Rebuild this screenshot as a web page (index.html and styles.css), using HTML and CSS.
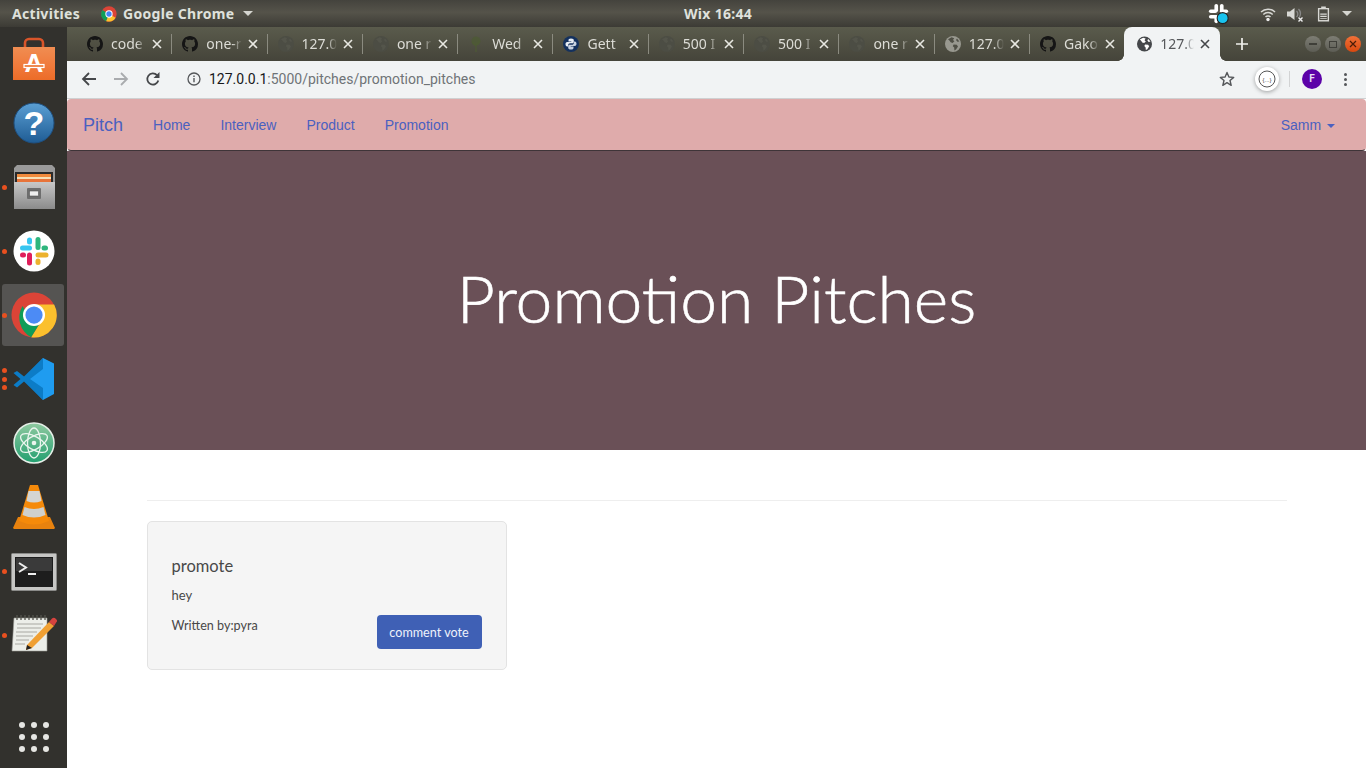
FILE: index.html
```html
<!DOCTYPE html>
<html lang="en">
<head>
<meta charset="utf-8">
<title>Pitch</title>
<link rel="stylesheet" href="styles.css">
</head>
<body>
<svg class="defs" width="0" height="0" aria-hidden="true">
  <symbol id="gh" viewBox="0 0 16 16"><path d="M8 0C3.58 0 0 3.58 0 8c0 3.54 2.29 6.53 5.47 7.59.4.07.55-.17.55-.38 0-.19-.01-.82-.01-1.49-2.01.37-2.53-.49-2.69-.94-.09-.23-.48-.94-.82-1.13-.28-.15-.68-.52-.01-.53.63-.01 1.08.58 1.23.82.72 1.21 1.87.87 2.33.66.07-.52.28-.87.51-1.07-1.78-.2-3.64-.89-3.64-3.95 0-.87.31-1.59.82-2.15-.08-.2-.36-1.02.08-2.12 0 0 .67-.21 2.2.82.64-.18 1.32-.27 2-.27.68 0 1.36.09 2 .27 1.53-1.04 2.2-.82 2.2-.82.44 1.1.16 1.92.08 2.12.51.56.82 1.27.82 2.15 0 3.07-1.87 3.75-3.65 3.95.29.25.54.73.54 1.48 0 1.07-.01 1.93-.01 2.2 0 .21.15.46.55.38A8.013 8.013 0 0016 8c0-4.42-3.58-8-8-8z" fill="currentColor"/></symbol>
  <symbol id="globe" viewBox="0 0 16 16"><circle cx="8" cy="8" r="8" fill="currentColor"/><path class="land" d="M3 3.2 6.6 1.3 9.2 2.2 8 4 9.4 5.2 7.6 7 5.6 6.3 4.6 4.8ZM8.6 8.4 11.8 8.8 13 10.4 11 13.6 9.4 14.4 9.2 11.6 7.8 10.2ZM12 2.6 14.4 5.4 12.4 5.8 11 4Z"/></symbol>
  <symbol id="cross" viewBox="0 0 10 10"><path d="M1 1 9 9M9 1 1 9" stroke="currentColor" stroke-width="1.6" fill="none"/></symbol>
</svg>

<div class="desktop">
  <header class="topbar">
    <div class="top-left">
      <span class="top-item">Activities</span>
      <span class="top-app">
        <svg class="chrome-mini" viewBox="0 0 48 48"><circle cx="24" cy="24" r="23" fill="#db4437"/><path d="M24 24 44 35A23 23 0 0 1 15 45Z" fill="#fbc02d"/><path d="M24 24 15 46A23 23 0 0 1 4 12Z" fill="#0f9d58"/><circle cx="24" cy="24" r="11" fill="#fff"/><circle cx="24" cy="24" r="8" fill="#4285f4"/></svg>
        <span class="top-item">Google Chrome</span>
        <span class="caret-top"></span>
      </span>
    </div>
    <span class="top-item clock">Wix 16:44</span>
    <div class="top-right">
      <span class="slack-tray">
        <svg viewBox="0 0 24 24" width="22" height="22"><g fill="#fff"><rect x="7" y="1" width="4" height="9" rx="2"/><rect x="1" y="7" width="9" height="4" rx="2"/><rect x="13" y="1" width="4" height="9" rx="2"/><rect x="1" y="13" width="9" height="4" rx="2"/><rect x="7" y="13" width="4" height="9" rx="2"/><rect x="13" y="7" width="9" height="4" rx="2"/></g><circle cx="16" cy="16.500" r="6" fill="#19c3ee" stroke="#222" stroke-width="1.200"/></svg>
      </span>
      <svg class="tray wifi" viewBox="0 0 16 16" width="16" height="16"><path d="M1 6a10 10 0 0 1 14 0M3.300 8.500a6.800 6.800 0 0 1 9.400 0M5.500 11a3.500 3.500 0 0 1 5 0" fill="none" stroke="#d8d8d4" stroke-width="1.500"/><circle cx="8" cy="13.500" r="1.700" fill="#eee"/></svg>
      <svg class="tray vol" viewBox="0 0 18 16" width="18" height="16"><path d="M1 5.500h3L8.500 2v12L4 10.500H1Z" fill="#d8d8d4"/><path d="M10.500 5a4 4 0 0 1 0 6M12.500 3a7 7 0 0 1 1 8" fill="none" stroke="#888" stroke-width="1.300"/><path d="M12.500 11.500l4 4M16.500 11.500l-4 4" stroke="#eee" stroke-width="1.400"/></svg>
      <svg class="tray batt" viewBox="0 0 14 16" width="13" height="16"><path d="M4.500 0h5v1.500H13V16H1V1.500h3.500Z" fill="#d8d8d4"/><path d="M2.500 3h9v11.500h-9Z" fill="#4d4c44"/><path d="M3.500 7.500h7v1.300h-7ZM3.500 10h7v1.300h-7ZM3.500 12.500h7v1h-7Z" fill="#d8d8d4"/></svg>
      <span class="caret-top"></span>
    </div>
  </header>

  <nav class="dock">
    <div class="dock-item">
      <svg viewBox="0 0 44 44" width="44" height="44"><defs><linearGradient id="b" x1="0" y1="0" x2="0" y2="1"><stop offset="0" stop-color="#f08d52"/><stop offset=".6" stop-color="#f0793a"/><stop offset="1" stop-color="#ec6c28"/></linearGradient></defs><path d="M13 11V6a4 4 0 0 1 4-4h10a4 4 0 0 1 4 4v5" fill="none" stroke="#d9552a" stroke-width="2.600"/><rect x="1" y="10" width="42" height="33" fill="url(#b)"/><text x="22" y="35" class="bag-a">A</text><rect x="12" y="27.500" width="20" height="3" fill="#ee7f40" stroke="#fff" stroke-width="1.200"/></svg>
    </div>
    <div class="dock-item">
      <svg viewBox="0 0 42 42" width="42" height="42"><defs><linearGradient id="h" x1="0" y1="0" x2="0" y2="1"><stop offset="0" stop-color="#5b9fd4"/><stop offset="1" stop-color="#1f5c94"/></linearGradient></defs><circle cx="21" cy="21" r="20" fill="url(#h)" stroke="#1e4f7f"/><text x="21" y="33" class="help-q">?</text></svg>
    </div>
    <div class="dock-item has-dot">
      <span class="pip"></span>
      <svg viewBox="0 0 44 46" width="44" height="46"><defs><linearGradient id="f" x1="0" y1="0" x2="0" y2="1"><stop offset="0" stop-color="#c8c8c8"/><stop offset="1" stop-color="#8b8b8b"/></linearGradient></defs><path d="M2 4 5 1h35l3 3v41H2Z" fill="#9a9a9a"/><rect x="3" y="8" width="38" height="12" fill="#2a2a2a"/><rect x="5" y="10" width="34" height="3" fill="#f08a3c"/><rect x="5" y="13" width="34" height="2" fill="#f7e0b6"/><rect x="5" y="15" width="34" height="3" fill="#e8743a"/><rect x="2" y="18" width="41" height="27" fill="url(#f)"/><rect x="15" y="24" width="14" height="11" rx="1" fill="#6d6d6d"/><rect x="17.500" y="27" width="9" height="5" fill="#eee" stroke="#555" stroke-width=".6"/></svg>
    </div>
    <div class="dock-item has-dot">
      <span class="pip"></span>
      <svg viewBox="0 0 42 42" width="42" height="42"><circle cx="21" cy="21" r="20.500" fill="#fff"/><g><rect x="7" y="15.500" width="12" height="5" rx="2.500" fill="#36c5f0"/><rect x="14" y="7.500" width="5" height="7" rx="2.500" fill="#36c5f0"/><rect x="22.500" y="7" width="5" height="13" rx="2.500" fill="#2eb67d"/><rect x="28.500" y="15.500" width="6.500" height="5" rx="2.500" fill="#2eb67d"/><rect x="14" y="22.500" width="5" height="13" rx="2.500" fill="#e01e5a"/><rect x="7" y="22.500" width="6" height="5" rx="2.500" fill="#e01e5a"/><rect x="22.500" y="22.500" width="13" height="5" rx="2.500" fill="#ecb22e"/><rect x="22.500" y="28.500" width="5" height="6.500" rx="2.500" fill="#ecb22e"/></g></svg>
    </div>
    <div class="dock-item has-dot active">
      <span class="pip"></span>
      <svg viewBox="0 0 48 48" width="46" height="46"><circle cx="24" cy="24" r="23.500" fill="#db4437"/><path d="M24 13H45A23.500 23.500 0 0 1 21 47.300L33 28Z" fill="#fbc02d"/><path d="M24 35 12 14.500 A23.500 23.500 0 0 0 21 47.300L33 28Z" fill="#0f9d58"/><circle cx="24" cy="24" r="11.500" fill="#fff"/><circle cx="24" cy="24" r="9" fill="#4c8bf5"/></svg>
    </div>
    <div class="dock-item has-dot">
      <span class="pip pip-1"></span><span class="pip"></span><span class="pip pip-3"></span>
      <svg viewBox="0 0 42 44" width="42" height="44"><path d="M30 1 41 6.500V37L30 43 10 22Z" fill="#1f9cf0"/><path d="M30 1 11 19.500 4 14 .5 16 7.500 22 .5 28 4 30.500 11 24.500 30 43 30 31 17 22 30 12Z" fill="#0c7cc7"/></svg>
    </div>
    <div class="dock-item">
      <svg viewBox="0 0 42 42" width="42" height="42"><defs><linearGradient id="a" x1="0" y1="0" x2="0" y2="1"><stop offset="0" stop-color="#8fc9a0"/><stop offset="1" stop-color="#23a070"/></linearGradient></defs><circle cx="21" cy="21" r="20" fill="url(#a)" stroke="#e6efe8" stroke-width="1.500"/><g fill="none" stroke="#eaf5ee" stroke-width="1.300"><ellipse cx="21" cy="21" rx="15" ry="6.500" transform="rotate(30 21 21)"/><ellipse cx="21" cy="21" rx="15" ry="6.500" transform="rotate(-30 21 21)"/><ellipse cx="21" cy="21" rx="15" ry="6.500" transform="rotate(90 21 21)"/></g><circle cx="21" cy="21" r="2.300" fill="#eaf5ee"/></svg>
    </div>
    <div class="dock-item">
      <svg viewBox="0 0 42 46" width="42" height="46"><path d="M0 44 5 33H37L42 44 41 45H1Z" fill="#e8820e"/><path d="M17 1H25L36 37Q21 44 6 37Z" fill="#f58a0a"/><path d="M15.500 7H26.500L28.500 17Q21 20 13.500 17Z" fill="#d4d5d2"/><path d="M11.500 23Q21 27 30.500 23L32.500 31Q21 36 9.500 31Z" fill="#cfd0cd"/></svg>
    </div>
    <div class="dock-item has-dot">
      <span class="pip"></span>
      <svg class="term" viewBox="0 0 46 38" width="46" height="38"><rect x=".5" y=".5" width="45" height="37" rx="1" fill="#c6c6c4" stroke="#8a8a88"/><rect x="4" y="4" width="38" height="30" fill="#1d1d1d"/><rect x="5" y="5" width="36" height="13" fill="#3a3a3a"/><path d="M8 10 15 14.500 8 19" fill="none" stroke="#eee" stroke-width="2"/><rect x="17" y="20" width="8" height="2" fill="#eee"/></svg>
    </div>
    <div class="dock-item has-dot">
      <span class="pip"></span>
      <svg class="notes" viewBox="0 0 46 38" width="46" height="38"><path d="M3 4H36V37H1Z" fill="#eceee9" stroke="#9a9a95" stroke-width=".6"/><g stroke="#55554f" stroke-width="1.300"><path d="M6 1V6M10 1V6M14 1V6M18 1V6M22 1V6M26 1V6M30 1V6M34 1V6"/></g><g stroke="#a8a8a2" stroke-width="1"><path d="M6 10H32M6 14H30M5 18H26M5 22H22M5 26H18M4 30H14"/></g><path d="M16 31 38 8 43 12 21 34 15 36Z" fill="#f0a033"/><path d="M38 8 41 4.500Q43 3 45 5T45.500 8L43 12Z" fill="#d5433f"/><path d="M16 31 21 34 15 36Z" fill="#222"/></svg>
    </div>
    <div class="dock-grid">
      <span></span><span></span><span></span><span></span><span></span><span></span><span></span><span></span><span></span>
    </div>
  </nav>

  <div class="browser">
    <div class="tabstrip">
      <div class="tab"><svg class="fav fav-gh"><use href="#gh"/></svg><span class="tab-title">code</span><svg class="close"><use href="#cross"/></svg></div>
      <div class="tab"><svg class="fav fav-gh"><use href="#gh"/></svg><span class="tab-title">one-r</span><svg class="close"><use href="#cross"/></svg></div>
      <div class="tab"><svg class="fav fav-dim"><use href="#globe"/></svg><span class="tab-title">127.0</span><svg class="close"><use href="#cross"/></svg></div>
      <div class="tab"><svg class="fav fav-dim"><use href="#globe"/></svg><span class="tab-title">one r</span><svg class="close"><use href="#cross"/></svg></div>
      <div class="tab"><svg class="fav" viewBox="0 0 16 16"><path d="M8 16V8M8 10 4 6M8 9l4-4" stroke="#4e5a34" stroke-width="1.200" fill="none"/><circle cx="8" cy="5" r="4.500" fill="#4e5a34" opacity=".8"/></svg><span class="tab-title">Wed</span><svg class="close"><use href="#cross"/></svg></div>
      <div class="tab"><svg class="fav" viewBox="0 0 16 16"><circle cx="8" cy="8" r="8" fill="#14315e"/><path d="M8 2.500c-2 0-2.500.8-2.500 1.800V5.500H8.300V6H4.200C3 6 2.500 7 2.500 8.200S3 10.500 4.200 10.500h1V9c0-1 .8-1.800 1.800-1.800h2.300c.9 0 1.500-.6 1.500-1.500V4.300C10.800 3.200 10 2.500 8 2.500Z" fill="#e8edf4"/><path d="M8 13.500c2 0 2.500-.8 2.500-1.800V10.500H7.700V10h4.100c1.200 0 1.700-1 1.700-2.200s-.5-2.300-1.700-2.300h-1V7c0 1-.8 1.800-1.800 1.800H6.700c-.9 0-1.500.6-1.500 1.500v1.400c0 1.100.8 1.800 2.800 1.800Z" fill="#c9d3e1"/></svg><span class="tab-title">Gett</span><svg class="close"><use href="#cross"/></svg></div>
      <div class="tab"><svg class="fav fav-dim"><use href="#globe"/></svg><span class="tab-title">500 I</span><svg class="close"><use href="#cross"/></svg></div>
      <div class="tab"><svg class="fav fav-dim"><use href="#globe"/></svg><span class="tab-title">500 I</span><svg class="close"><use href="#cross"/></svg></div>
      <div class="tab"><svg class="fav fav-dim"><use href="#globe"/></svg><span class="tab-title">one r</span><svg class="close"><use href="#cross"/></svg></div>
      <div class="tab"><svg class="fav fav-grey"><use href="#globe"/></svg><span class="tab-title">127.0</span><svg class="close"><use href="#cross"/></svg></div>
      <div class="tab"><svg class="fav fav-gh"><use href="#gh"/></svg><span class="tab-title">Gako</span><svg class="close"><use href="#cross"/></svg></div>
      <div class="tab tab-active"><svg class="fav fav-active"><use href="#globe"/></svg><span class="tab-title">127.0</span><svg class="close"><use href="#cross"/></svg></div>
      <svg class="newtab" viewBox="0 0 12 12" width="12" height="12"><path d="M6 0V12M0 6H12" stroke="#f0f0ec" stroke-width="1.700"/></svg>
      <div class="winctl">
        <span class="wbtn"><i class="w-min"></i></span>
        <span class="wbtn"><i class="w-max"></i></span>
        <span class="wbtn wclose"><svg viewBox="0 0 8 8" width="8" height="8"><path d="M1 1 7 7M7 1 1 7" stroke="#4a1c08" stroke-width="1.200"/></svg></span>
      </div>
    </div>

    <div class="toolbar">
      <svg class="tool" viewBox="0 0 16 16" width="16" height="16"><path d="M15 8H2M8 2 2 8l6 6" fill="none" stroke="#45474a" stroke-width="1.800"/></svg>
      <svg class="tool fwd" viewBox="0 0 16 16" width="16" height="16"><path d="M1 8H14M8 2l6 6-6 6" fill="none" stroke="#a9abae" stroke-width="1.800"/></svg>
      <svg class="tool reload" viewBox="0 0 16 16" width="16" height="16"><path d="M13.300 9.500A5.600 5.600 0 1 1 12 4.200" fill="none" stroke="#45474a" stroke-width="1.800"/><path d="M14.500 1v6h-6Z" fill="#45474a"/></svg>
      <div class="omnibox">
        <svg class="info" viewBox="0 0 14 14" width="14" height="14"><circle cx="7" cy="7" r="6" fill="none" stroke="#55575a" stroke-width="1.300"/><path d="M7 6v4.200M7 3.500v1.400" stroke="#55575a" stroke-width="1.400"/></svg>
        <span class="url"><b>127.0.0.1</b>:5000/pitches/promotion_pitches</span>
        <svg class="star" viewBox="0 0 16 16" width="16" height="16"><path d="M8 1.500 9.900 6l4.800.4-3.700 3.100 1.200 4.800L8 11.700l-4.200 2.600L5 9.500 1.300 6.400 6.100 6Z" fill="none" stroke="#55575a" stroke-width="1.400" stroke-linejoin="round"/></svg>
      </div>
      <span class="ext"><svg viewBox="0 0 18 18" width="18" height="18"><circle cx="9" cy="9" r="8" fill="none" stroke="#555" stroke-width="1"/><text x="9" y="11.500" class="ext-t">{...}</text></svg></span>
      <span class="tool-sep"></span>
      <span class="avatar">F</span>
      <span class="kebab"><i></i><i></i><i></i></span>
    </div>

    <main class="page">
      <div class="navbar">
        <a class="brand">Pitch</a>
        <ul class="navlinks">
          <li>Home</li>
          <li>Interview</li>
          <li>Product</li>
          <li>Promotion</li>
        </ul>
        <div class="nav-user">Samm <span class="caret"></span></div>
      </div>
      <section class="hero">
        <h1>Promotion Pitches</h1>
      </section>
      <div class="container">
        <hr class="rule">
        <article class="card">
          <h3>promote</h3>
          <p class="body-text">hey</p>
          <div class="card-foot">
            <p class="byline">Written by:pyra</p>
            <a class="btn">comment vote</a>
          </div>
        </article>
      </div>
    </main>
  </div>
</div>
</body>
</html>
```

FILE: styles.css
```css
* { box-sizing: border-box; }
html, body { margin: 0; height: 100%; overflow: hidden; background: #fff; }
.defs { display: block; height: 0; }

.desktop {
  display: grid;
  grid-template-columns: 67px 1fr;
  grid-template-rows: 27px 1fr;
  width: 1366px;
  height: 768px;
}

/* ---------- top bar ---------- */
.topbar {
  grid-column: 1 / 3;
  display: grid;
  grid-template-columns: 672px auto 1fr;
  align-items: center;
  padding: 0 14px 0 12px;
  background: linear-gradient(#44433d, #55534a 45%, #3c3b35);
  color: #dfe1dc;
  font: 700 14px/27px "Noto Sans", sans-serif;
}
.top-left { display: flex; align-items: center; gap: 21px; }
.top-item { letter-spacing: .3px; white-space: nowrap; }
.top-app { display: flex; align-items: center; gap: 6px; }
.chrome-mini { width: 16px; height: 16px; }
.caret-top {
  width: 0; height: 0; margin-left: 3px;
  border-left: 5px solid transparent;
  border-right: 5px solid transparent;
  border-top: 5px solid #d5d5d0;
}
.top-right { display: flex; align-items: center; justify-content: flex-end; gap: 9px; }
.slack-tray { display: flex; margin-right: 21px; }
.tray { display: block; }
.vol { margin-left: 1px; }
.batt { margin-left: 4px; }

/* ---------- dock ---------- */
.dock {
  display: flex;
  flex-direction: column;
  background: #32312d;
  overflow: hidden;
}
.dock-item {
  position: relative;
  flex: 0 0 64px;
  display: flex;
  align-items: center;
  justify-content: center;
}
.dock-item.active::before {
  content: "";
  position: absolute;
  left: 2px; top: 1px;
  width: 62px; height: 62px;
  border-radius: 3px;
  background: #555452;
}
.dock-item svg { position: relative; }
.term { margin-top: 2px; }
.notes { margin-bottom: 4px; }
.pip {
  position: absolute;
  left: 2px; top: 29.500px;
  width: 5px; height: 5px;
  border-radius: 50%;
  background: #e9501f;
}
.pip-1 { top: 20.500px; }
.pip-3 { top: 38px; }
.bag-a { font: 700 26px "Liberation Sans", sans-serif; fill: #fff; text-anchor: middle; }
.help-q { font: 700 34px "Liberation Sans", sans-serif; fill: #fff; text-anchor: middle; }
.dock-grid {
  display: grid;
  grid-template-columns: repeat(3, 6px);
  gap: 6px;
  justify-content: center;
  margin-top: 55px;
}
.dock-grid span { width: 6px; height: 6px; border-radius: 50%; background: #e6e6e3; }

/* ---------- browser chrome ---------- */
.browser { display: flex; flex-direction: column; min-width: 0; overflow: hidden; }
.tabstrip {
  flex: 0 0 34px;
  display: flex;
  align-items: stretch;
  padding-left: 10px;
  background: linear-gradient(#5a5b4c, #45443a);
}
.tab {
  flex: 0 0 95.300px;
  display: flex;
  align-items: center;
  margin-top: 6px;
  padding: 0 10px 6px 10px;
  color: #dcdcd6;
  font: 14px/20px "Noto Sans", sans-serif;
  position: relative;
}
.tab::after {
  content: "";
  position: absolute;
  right: 0; top: 1px;
  width: 1px; height: 20px;
  background: #8b8b80;
}
.tab:nth-child(11)::after { display: none; }
.fav { flex: 0 0 16px; width: 16px; height: 16px; margin-right: 8px; --land: #fff; }
.land { fill: var(--land, #fff); }
.fav-gh { color: #151515; }
.fav-dim { color: #4c4d44; --land: #54554b; }
.fav-grey { color: #98988f; --land: #4f4f45; }
.fav-active { color: #45474a; }
.tab-title {
  flex: 1 1 auto;
  width: 0;
  margin-right: 6px;
  overflow: hidden;
  white-space: nowrap;
  -webkit-mask-image: linear-gradient(90deg, #000 72%, transparent 100%);
  mask-image: linear-gradient(90deg, #000 72%, transparent 100%);
}
.close { flex: 0 0 10px; width: 10px; height: 10px; color: #e8e8e2; }
.tab-active {
  margin-top: 0;
  margin-left: -1px;
  padding: 6px 10px 6px 13px;
  color: #55575a;
  background: #f1f3f4;
  border-radius: 8px 8px 0 0;
}
.tab-active .close { color: #45474a; }
.tab-active .fav { width: 15px; flex-basis: 15px; }
.tab-active::before, .tab-active::after {
  content: "";
  position: absolute;
  top: auto;
  bottom: 0;
  width: 6px;
  height: 6px;
}
.tab-active::before {
  left: -6px;
  background: radial-gradient(circle at 0 0, transparent 5.500px, #f1f3f4 6px);
}
.tab-active::after {
  right: -6px;
  background: radial-gradient(circle at 100% 0, transparent 5.500px, #f1f3f4 6px);
}
.newtab { align-self: center; margin-left: 16px; }
.winctl { display: flex; align-items: center; gap: 4px; margin-left: auto; padding-right: 5px; }
.wbtn {
  width: 16px; height: 16px;
  border-radius: 50%;
  display: flex; align-items: center; justify-content: center;
  background: linear-gradient(#7d7d74, #5d5d55);
}
.w-min { display: block; width: 8px; height: 2px; background: #3f3f39; }
.w-max { display: block; width: 8px; height: 7px; border: 1px solid #3f3f39; }
.wclose { background: linear-gradient(#f07138, #d8480f); }

.toolbar {
  flex: 0 0 38px;
  display: flex;
  align-items: center;
  padding: 0 0 1px 14px;
  background: #f1f3f4;
  border-bottom: 1px solid #cfd0d1;
}
.tool { flex: none; }
.fwd { margin-left: 16px; }
.reload { margin-left: 16px; }
.omnibox {
  flex: 0 0 1070px;
  height: 28px;
  margin-left: 14px;
  display: flex;
  align-items: center;
  padding: 0 6px 0 12px;
  border-radius: 14px;
  background: #f1f3f4;
}
.info { flex: none; }
.url {
  margin-left: 8px;
  font: 14px/20px Roboto, sans-serif;
  color: #6f7377;
  white-space: nowrap;
}
.url b { font-weight: 400; color: #17181a; }
.star { margin-left: auto; margin-right: 4px; }
.ext {
  width: 24px; height: 24px;
  margin-left: 10px;
  border-radius: 50%;
  background: #fff;
  box-shadow: 0 1px 4px rgba(0,0,0,.35);
  display: flex; align-items: center; justify-content: center;
}
.ext-t { font: 6px "Liberation Sans", sans-serif; fill: #444; text-anchor: middle; }
.tool-sep { width: 1px; height: 16px; margin-left: 10px; background: #d2d3d4; }
.avatar {
  width: 20px; height: 20px;
  margin-left: 12px;
  border-radius: 50%;
  background: #5c02a8;
  color: #e8dcf5;
  font: 700 10px/20px Roboto, sans-serif;
  text-align: center;
}
.kebab { display: flex; flex-direction: column; gap: 2px; margin-left: 22px; }
.kebab i { display: block; width: 3px; height: 3px; border-radius: 50%; background: #55575a; }

/* ---------- page ---------- */
.page {
  flex: 1 1 auto;
  background: #fff;
  font-family: "Liberation Sans", Arial, sans-serif;
  font-size: 14px;
  color: #333;
}
.navbar {
  display: flex;
  align-items: center;
  height: 52px;
  padding-bottom: 1px;
  background: #dfabab;
  border: 1px solid transparent;
  border-bottom-color: #3e3438;
  border-radius: 4px;
  color: #4a60c0;
}
.brand { padding: 0 15px; font-size: 18px; line-height: 20px; }
.navlinks { display: flex; list-style: none; margin: 0; padding: 0; }
.navlinks li { padding: 0 15px; line-height: 20px; }
.nav-user { margin-left: auto; padding: 0 30px 0 15px; line-height: 20px; }
.caret {
  display: inline-block;
  width: 0; height: 0;
  margin-left: 2px;
  vertical-align: middle;
  border-left: 4px solid transparent;
  border-right: 4px solid transparent;
  border-top: 4px solid #4a60c0;
}
.hero {
  height: 299px;
  padding-bottom: 5px;
  display: flex;
  align-items: center;
  justify-content: center;
  background: #6a5057;
}
.hero h1 {
  margin: 0;
  font: 300 66px/1.1 Lato, sans-serif;
  color: #fff;
  -webkit-text-stroke: .6px #fff;
}
.container { width: 1140px; margin: 0 auto; }
.rule { margin: 50px 0 20px; border: 0; border-top: 1px solid #eee; }
.card {
  width: 360px;
  height: 149px;
  padding: 34px 24px 0;
  background: #f5f5f5;
  border: 1px solid #e3e3e3;
  border-radius: 5px;
  font-family: Lato, sans-serif;
  color: #484848;
}
.card h3 { margin: 0; font-size: 16.500px; font-weight: 400; line-height: 20px; }
.body-text { margin: 10px 0 0; font-size: 13px; line-height: 19px; }
.card-foot { display: flex; align-items: flex-start; justify-content: space-between; margin-top: 11px; }
.byline { margin: 0; font-size: 12.600px; line-height: 19px; }
.btn {
  width: 105px;
  height: 34px;
  margin-top: -1px;
  border-radius: 4px;
  background: #3f60b5;
  color: #eef2fb;
  font-size: 12.600px;
  line-height: 36px;
  text-align: center;
}
```
